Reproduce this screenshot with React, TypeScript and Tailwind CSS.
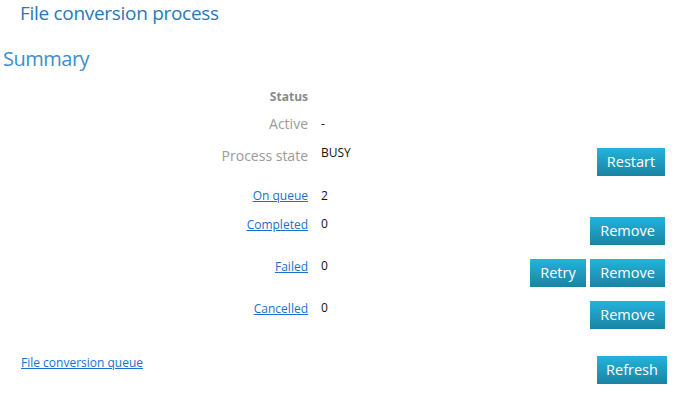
import React from 'react';

const font = { fontFamily: '"Open Sans", "Noto Sans", sans-serif' };

function Btn({ children, w }: { children: React.ReactNode; w: string }) {
  return (
    <button
      className={`${w} h-[28px] text-[14.5px] leading-none text-white bg-gradient-to-b from-[#24b3dd] to-[#1a84a2]`}
    >
      {children}
    </button>
  );
}

function Row({
  label,
  value,
  link,
  actions,
  className = '',
  valueClass = 'pt-[1px]',
}: {
  label: string;
  value: string;
  link?: boolean;
  actions?: React.ReactNode;
  className?: string;
  valueClass?: string;
}) {
  return (
    <div className={`flex items-start ${className}`}>
      {link ? (
        <div className="w-[308px] text-right text-[12px] leading-[16px]">
          <a href="#" className="text-[#1a6fd0] underline">
            {label}
          </a>
        </div>
      ) : (
        <div className="w-[308px] text-right text-[14px] leading-[16px] text-[#9a9a9a]">{label}</div>
      )}
      <div className={`ml-[13px] text-[12px] leading-[12px] text-[#111] ${valueClass}`}>{value}</div>
      <div className="ml-auto flex gap-[4px]">{actions}</div>
    </div>
  );
}

export default function App() {
  return (
    <div className="w-[685px] h-[396px] bg-white pr-[20px]" style={font}>
      <h1 className="pl-[20px] pt-[1px] text-[19px] tracking-[-0.3px] leading-[24px] text-[#2a79b6]">
        File conversion process
      </h1>
      <h2 className="pl-[3px] mt-[21px] text-[20px] tracking-[-0.5px] leading-[26px] text-[#3a8fd0]">Summary</h2>

      <div className="mt-[17px]">
        <div className="w-[308px] text-right text-[12px] font-bold leading-[16px] text-[#8a8a8a]">Status</div>
        <Row label="Active" value="-" className="mt-[11px]" valueClass="pt-[2px]" />
        <Row
          label="Process state"
          value="BUSY"
          className="mt-[16px]"
          valueClass="-mt-[1px]"
          actions={<Btn w="w-[68px]">Restart</Btn>}
        />
        <Row label="On queue" value="2" link className="mt-[12px]" valueClass="pt-[2px]" />
        <Row label="Completed" value="0" link className="mt-[13px]" actions={<Btn w="w-[75px]">Remove</Btn>} />
        <Row
          label="Failed"
          value="0"
          link
          className="mt-[14px]"
          actions={
            <>
              <Btn w="w-[56px]">Retry</Btn>
              <Btn w="w-[75px]">Remove</Btn>
            </>
          }
        />
        <Row label="Cancelled" value="0" link className="mt-[14px]" actions={<Btn w="w-[75px]">Remove</Btn>} />
      </div>

      <div className="mt-[27px] flex items-start">
        <a href="#" className="ml-[21px] -mt-[1px] text-[12px] leading-[16px] text-[#1a6fd0] underline">
          File conversion queue
        </a>
        <div className="ml-auto mr-[-2px]">
          <Btn w="w-[70px]">Refresh</Btn>
        </div>
      </div>
    </div>
  );
}
